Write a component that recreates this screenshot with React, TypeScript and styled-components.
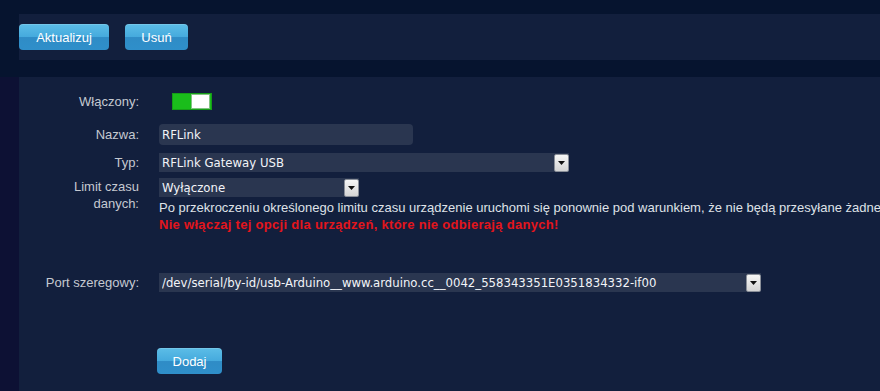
import styled, { createGlobalStyle } from "styled-components";

const GlobalStyle = createGlobalStyle`
  html, body {
    margin: 0;
    padding: 0;
    background: #06142f;
    overflow: hidden;
  }
  body {
    font-family: "Liberation Sans", Arial, sans-serif;
    font-size: 13px;
  }
`;

const Page = styled.div`
  display: flex;
  width: 880px;
  height: 391px;
`;

const SideStrip = styled.div`
  width: 19px;
  flex: none;
  background: #06142f;
  display: flex;
  flex-direction: column;
  padding-top: 77px;
  box-sizing: border-box;
`;

const SideFill = styled.div`
  flex: 1;
  background: #0d1134;
`;

const Main = styled.div`
  flex: 1;
  display: flex;
  flex-direction: column;
  padding-top: 14px;
  min-width: 0;
`;

const Toolbar = styled.div`
  height: 46px;
  background: #121f3d;
  display: flex;
  align-items: center;
  gap: 16px;
  margin-bottom: 17px;
`;

const Button = styled.button<{ $width: number }>`
  width: ${(p) => p.$width}px;
  height: 26px;
  border: none;
  border-radius: 4px;
  padding: 0;
  color: #fff;
  font-family: "Liberation Sans", Arial, sans-serif;
  font-size: 13px;
  background: linear-gradient(
    to bottom,
    #5cbde7 0%,
    #45aadd 50%,
    #2f8cc6 52%,
    #2f8fca 100%
  );
  box-shadow: inset 0 1px 0 rgba(255, 255, 255, 0.15);
  cursor: pointer;
`;

const Form = styled.div`
  flex: 1;
  background: #121f3d;
  padding-top: 16px;
  display: flex;
  flex-direction: column;
`;

const Row = styled.div<{ $top: number }>`
  display: grid;
  grid-template-columns: 120px 1fr;
  column-gap: 20px;
  margin-top: ${(p) => p.$top}px;
  align-items: start;
`;

const Label = styled.div<{ $lh?: number }>`
  text-align: right;
  color: #c5c9d1;
  font-size: 13px;
  line-height: ${(p) => p.$lh ?? 17}px;
`;

const Toggle = styled.div`
  margin-left: 13px;
  width: 40px;
  height: 17px;
  box-sizing: border-box;
  background: #1abd1b;
  border: 1px solid #159d16;
  display: flex;
  justify-content: flex-end;
  align-items: center;
  padding-right: 2px;
`;

const Knob = styled.div`
  width: 17px;
  height: 13px;
  background: #fff;
  box-shadow: 0 0 0 1px rgba(200, 200, 200, 0.6);
`;

const valueFont = `
  font-family: "DejaVu Sans Condensed", "DejaVu Sans", Tahoma, sans-serif;
  font-stretch: condensed;
  font-size: 13px;
  color: #f2f4f8;
`;

const TextInput = styled.div`
  width: 254px;
  height: 21px;
  box-sizing: border-box;
  background: #2a3650;
  border-radius: 4px;
  ${valueFont}
  line-height: 21px;
  padding-left: 3px;
`;

const Select = styled.div<{ $width: number }>`
  width: ${(p) => p.$width}px;
  height: 19px;
  display: flex;
  align-items: center;
  background: #2a3650;
  ${valueFont}
  box-sizing: border-box;
  padding-left: 3px;
`;

const SelectText = styled.span`
  flex: 1;
  white-space: nowrap;
  overflow: hidden;
`;

const Arrow = styled.div`
  width: 15px;
  height: 18px;
  flex: none;
  box-sizing: border-box;
  border: 1px solid #8a8f99;
  border-radius: 2px;
  background: linear-gradient(to bottom, #f6f6f6, #d4d4d4);
  display: flex;
  align-items: center;
  justify-content: center;
`;

const Field = styled.div`
  display: flex;
  flex-direction: column;
  min-width: 0;
`;

const Help = styled.div`
  color: #dfe2e8;
  font-size: 13px;
  line-height: 17px;
  margin-top: 2px;
  white-space: nowrap;
  overflow: hidden;
`;

const Warning = styled.div`
  color: #e3151c;
  font-weight: bold;
  font-size: 13px;
  letter-spacing: 0.3px;
  line-height: 17px;
  white-space: nowrap;
`;

const AddWrap = styled.div`
  margin-left: -2px;
`;

function DropArrow() {
  return (
    <Arrow>
      <svg width="7" height="4" viewBox="0 0 7 4">
        <path d="M0 0 H7 L3.5 4 Z" fill="#111" />
      </svg>
    </Arrow>
  );
}

export default function App() {
  return (
    <>
      <GlobalStyle />
      <Page>
        <SideStrip>
          <SideFill />
        </SideStrip>
        <Main>
          <Toolbar>
            <Button $width={90}>Aktualizuj</Button>
            <Button $width={63}>Usuń</Button>
          </Toolbar>
          <Form>
            <Row $top={0}>
              <Label>Włączony:</Label>
              <Toggle>
                <Knob />
              </Toggle>
            </Row>
            <Row $top={14}>
              <Label $lh={21}>Nazwa:</Label>
              <TextInput>RFLink</TextInput>
            </Row>
            <Row $top={8}>
              <Label $lh={19}>Typ:</Label>
              <Select $width={410}>
                <SelectText>RFLink Gateway USB</SelectText>
                <DropArrow />
              </Select>
            </Row>
            <Row $top={6}>
              <Label>
                Limit czasu
                <br />
                danych:
              </Label>
              <Field>
                <Select $width={200}>
                  <SelectText>Wyłączone</SelectText>
                  <DropArrow />
                </Select>
                <Help>
                  Po przekroczeniu określonego limitu czasu urządzenie uruchomi
                  się ponownie pod warunkiem, że nie będą przesyłane żadne
                </Help>
                <Warning>
                  Nie włączaj tej opcji dla urządzeń, które nie odbierają
                  danych!
                </Warning>
              </Field>
            </Row>
            <Row $top={40}>
              <Label $lh={19}>Port szeregowy:</Label>
              <Select $width={602}>
                <SelectText>
                  /dev/serial/by-id/usb-Arduino__www.arduino.cc__0042_558343351E0351834332-if00
                </SelectText>
                <DropArrow />
              </Select>
            </Row>
            <Row $top={56}>
              <div />
              <AddWrap>
                <Button $width={65}>Dodaj</Button>
              </AddWrap>
            </Row>
          </Form>
        </Main>
      </Page>
    </>
  );
}
